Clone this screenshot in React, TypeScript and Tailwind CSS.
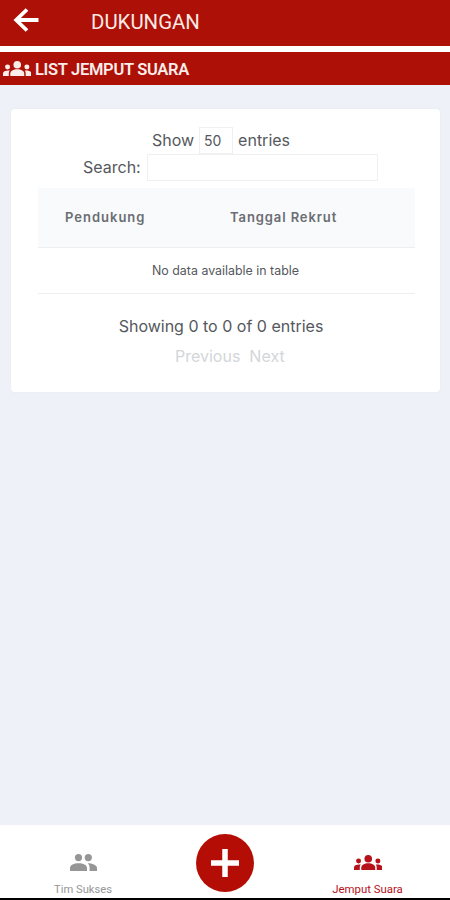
import React from "react";

const GroupsIcon: React.FC<{ className?: string }> = ({ className }) => {
  return (
    <svg viewBox="0 0 28.6 15" className={className} fill="currentColor">
      <circle cx="14.3" cy="3.8" r="3.8" />
      <circle cx="4.6" cy="6" r="2.5" />
      <circle cx="24" cy="6" r="2.5" />
      <path d="M7.3 15v-2.4c0-2.7 3.200-4.400 7-4.400s7 1.700 7 4.400V15z" />
      <path d="M0 15v-2.400c0-2.200 2.600-3.300 6.800-3-.7.9-1 1.800-1 2.900V15z" />
      <path d="M28.6 15v-2.400c0-2.200-2.600-3.300-6.800-3 .7.900 1 1.800 1 2.900V15z" />
    </svg>
  );
};

const Header: React.FC = () => {
  return (
    <>
      <div className="h-[46px] bg-[#ac1006] flex items-center pb-1">
        <svg viewBox="0 0 26 24" className="ml-[13px] w-[26px] h-6 -mt-0.5" fill="none" stroke="#fff" strokeWidth="3.8">
          <path d="M14 1.5 3.2 12 14 22.5M3.2 12H25.5" />
        </svg>
        <h1 className="ml-[52px] mt-0.5 text-[20.4px] leading-6 text-[#fbe9e4] font-[Roboto]">
          DUKUNGAN
        </h1>
      </div>
      <div className="mt-1.5 h-[33px] bg-[#ac1006] flex items-center text-[#fbeeea]">
        <GroupsIcon className="ml-[2.5px] w-[28.5px] h-[15px]" />
        <h2 className="ml-1 pt-[3px] text-[16.5px] tracking-[-0.3px] font-semibold font-[Roboto]">
          LIST JEMPUT SUARA
        </h2>
      </div>
    </>
  );
};

const TableCard: React.FC = () => {
  return (
    <div className="ml-[11px] mr-[10px] mt-6 h-[283px] bg-white rounded-sm shadow-[0_0_2px_#e2e5ea] text-[#55585c] font-[Inter]">
      <div className="pt-[18px] flex h-[45px] items-center justify-center pr-[9px] text-[16px]">
        <span className="-mt-0.5">Show</span>
        <span className="mx-[5px] w-[34px] h-[27px] border border-[#f0f0f2] flex items-center pl-1 text-[14px]">
          50
        </span>
        <span className="-mt-0.5">entries</span>
      </div>
      <div className="flex h-[27px] items-center pl-[72px] text-[16px]">
        <label className="-mt-0.5">Search:</label>
        <input className="ml-[6px] w-[231px] h-[27px] border border-[#f0f0f2]" />
      </div>

      <table className="ml-[27px] mt-[7px] w-[377px] table-fixed text-[13px]">
        <thead>
          <tr className="h-[59px] bg-[#f9fafc] border-b border-[#eceef1] text-left text-[#6a6d72]">
            <th className="w-[165px] pl-[27px] font-semibold tracking-[1px]">Pendukung</th>
            <th className="pl-[27px] font-semibold tracking-[0.9px]">Tanggal Rekrut</th>
          </tr>
        </thead>
        <tbody>
          <tr className="h-[46px] border-b border-[#eceef1] text-[12.4px]">
            <td colSpan={2} className="text-center pr-0.5 pt-0.5">No data available in table</td>
          </tr>
        </tbody>
      </table>

      <p className="mt-5 pr-[9px] text-center text-[16px] leading-6">Showing 0 to 0 of 0 entries</p>
      <div className="mt-1.5 flex gap-[9px] pl-[164px] text-[16px] leading-6 text-[#d3d6d9]">
        <span>Previous</span>
        <span>Next</span>
      </div>
    </div>
  );
};

const BottomNav: React.FC = () => {
  return (
    <div className="h-[75px] bg-white border-b-2 border-black grid grid-cols-[165px_120px_165px] text-[11.2px] font-[Roboto]">
      <div className="pt-[29px] pl-[1px] flex flex-col items-center text-[#969696]">
        <svg viewBox="0 0 27 17" className="w-[27px] h-[17px]" fill="currentColor">
          <circle cx="8.5" cy="3.6" r="3.6" />
          <circle cx="18.3" cy="3.6" r="3.6" />
          <path d="M0 17v-3c0-3.200 4-4.800 8.500-4.800s8.500 1.600 8.500 4.800v3z" />
          <path d="M17.800 9.300c4.200.1 9.200 1.600 9.200 4.700v3h-7.400v-3c0-1.900-.6-3.500-1.800-4.700z" />
        </svg>
        <span className="mt-[11px]">Tim Sukses</span>
      </div>
      <div className="pt-[9px] flex justify-center">
        <div className="w-[58px] h-[58px] rounded-full bg-[#b40d05] flex items-center justify-center">
          <svg viewBox="0 0 28 28" className="w-7 h-7" stroke="#fff" strokeWidth="5.5">
            <path d="M14 0v28M0 14h28" />
          </svg>
        </div>
      </div>
      <div className="pt-[30px] flex flex-col items-center text-[#b5121b]">
        <GroupsIcon className="ml-[1px] w-[28.5px] h-[15px]" />
        <span className="mt-[11px] text-[11.4px]">Jemput Suara</span>
      </div>
    </div>
  );
};

const App: React.FC = () => {
  return (
    <div className="h-[900px] w-[450px] bg-white flex flex-col">
      <Header />
      <div className="flex-1 bg-[#eef2f8] flow-root">
        <TableCard />
      </div>
      <BottomNav />
    </div>
  );
};

export default App;
